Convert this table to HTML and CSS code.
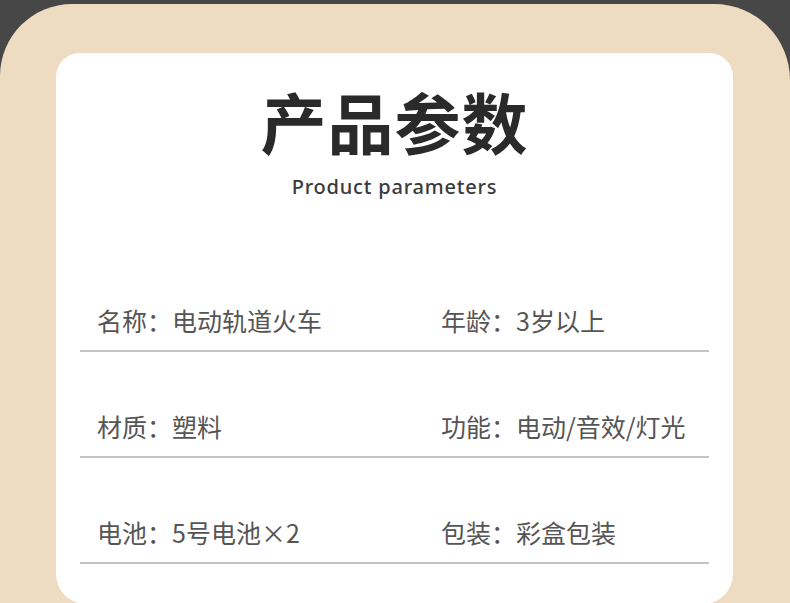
FILE: index.html
```html
<!DOCTYPE html>
<html lang="zh-CN">
<head>
    <meta charset="UTF-8">
    <meta name="viewport" content="width=device-width, initial-scale=1.0">
    <title>产品参数</title>
    <link rel="stylesheet" href="styles.css">
</head>
<body>
    <div class="panel">
        <div class="card">
            <h1 class="title">产品参数</h1>
            <p class="subtitle">Product parameters</p>

            <div class="param-row">
                <span class="param">名称：电动轨道火车</span>
                <span class="param">年龄：3岁以上</span>
            </div>
            <div class="param-row">
                <span class="param">材质：塑料</span>
                <span class="param">功能：电动/音效/灯光</span>
            </div>
            <div class="param-row">
                <span class="param">电池：5号电池×2</span>
                <span class="param">包装：彩盒包装</span>
            </div>
        </div>
    </div>
</body>
</html>
```

FILE: styles.css
```css
/* product parameters block */
html, body {
    margin: 0;
    height: 100%;
    overflow: hidden;
}
body {
    background-color: #474747;
    font-family: "Noto Sans CJK SC", "Noto Sans", sans-serif;
    padding-top: 4px;
    box-sizing: border-box;
}

.panel {
    background-color: #eedcc2;
    border-radius: 72px 76px 0 0;
    padding: 49px 57px 0 56px;
    height: 599px;
    box-sizing: border-box;
    overflow: hidden;
}

.card {
    background-color: #fff;
    border-radius: 24px 24px 30px 30px;
    padding: 22px 24px 40px 24px;
}

.title {
    margin: 0;
    text-align: center;
    font-size: 66px;
    font-weight: 700;
    line-height: 90px;
    color: #2a2a2a;
    letter-spacing: 1px;
}
.subtitle {
    margin: 0;
    text-align: center;
    font-family: "Noto Sans", sans-serif;
    font-size: 20px;
    font-weight: 500;
    line-height: 28px;
    color: #3a3a3a;
    letter-spacing: 0.8px;
    padding-top: 8px;
}

.param-row {
    display: grid;
    grid-template-columns: 344px 1fr;
    align-items: end;
    height: 106px;
    padding-left: 17px;
    border-bottom: 2px solid #c4c4c4;
    box-sizing: border-box;
}
.param-row:first-of-type {
    height: 151px;
}
.param {
    font-size: 25px;
    line-height: 30px;
    color: #555;
    padding-bottom: 15px;
}
```
